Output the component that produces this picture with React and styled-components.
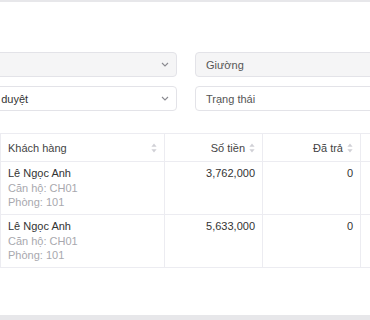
import React from "react";
import styled, { createGlobalStyle } from "styled-components";

const GlobalStyle = createGlobalStyle`
  html, body {
    margin: 0;
    padding: 0;
    background: #ffffff;
    overflow: hidden;
    font-family: "Liberation Sans", Arial, sans-serif;
  }
`;

const rows = [
  { name: "Lê Ngọc Anh", unit: "CH01", room: "101", amount: "3,762,000", paid: "0", debt: "3,762,000" },
  { name: "Lê Ngọc Anh", unit: "CH01", room: "101", amount: "5,633,000", paid: "0", debt: "5,633,000" },
];

function SortIcon() {
  return (
    <svg width="6" height="10" viewBox="0 0 6 10">
      <path d="M3 0.5 L5.6 3.8 H0.4 Z" fill="#d0d0d6" />
      <path d="M3 9.5 L5.6 6.2 H0.4 Z" fill="#d0d0d6" />
    </svg>
  );
}

function Chevron() {
  return (
    <svg width="8" height="5" viewBox="0 0 8 5">
      <path d="M1 1 L4 4 L7 1" fill="none" stroke="#8a8a90" strokeWidth="1.1" />
    </svg>
  );
}

export default function App() {
  return (
    <Page>
      <GlobalStyle />
      <TopBar />
      <Content>
        <Filters>
          <Select disabled>
            <span>Tòa nhà</span>
            <Chevron />
          </Select>
          <Field disabled>Giường</Field>
          <Select>
            <span>Trạng thái duyệt</span>
            <Chevron />
          </Select>
          <Field>Trạng thái</Field>
        </Filters>

        <Table>
          <thead>
            <tr>
              <Th>
                <HeadCell>
                  <span>Khách hàng</span>
                  <SortIcon />
                </HeadCell>
              </Th>
              <Th align="right">
                <HeadCell align="right">
                  <span>Số tiền</span>
                  <SortIcon />
                </HeadCell>
              </Th>
              <Th align="right">
                <HeadCell align="right">
                  <span>Đã trả</span>
                  <SortIcon />
                </HeadCell>
              </Th>
              <Th align="right">
                <HeadCell align="right">
                  <span>Còn nợ</span>
                  <SortIcon />
                </HeadCell>
              </Th>
            </tr>
          </thead>
          <tbody>
            {rows.map((r, i) => (
              <tr key={i}>
                <Td>
                  <Name>{r.name}</Name>
                  <Sub>Căn hộ: {r.unit}</Sub>
                  <Sub>Phòng: {r.room}</Sub>
                </Td>
                <Td align="right">{r.amount}</Td>
                <Td align="right">{r.paid}</Td>
                <Td align="right">{r.debt}</Td>
              </tr>
            ))}
          </tbody>
        </Table>
      </Content>
      <BottomBar />
    </Page>
  );
}

const Page = styled.div`
  width: 370px;
  height: 320px;
  overflow: hidden;
  display: flex;
  flex-direction: column;
`;

const TopBar = styled.div`
  height: 2px;
  flex-shrink: 0;
  background: #e7e7ea;
`;

const Content = styled.div`
  flex: 1;
  padding-top: 50px;
`;

const Filters = styled.div`
  display: grid;
  grid-template-columns: 239px 245px;
  grid-auto-rows: 25px;
  column-gap: 18px;
  row-gap: 9px;
  margin-left: -62px;
`;

const Control = styled.div`
  box-sizing: border-box;
  height: 25px;
  border: 1px solid #e3e3e8;
  border-radius: 4px;
  background: ${(p) => (p.disabled ? "#f5f5f6" : "#ffffff")};
  font-size: 11px;
  color: #444;
  display: flex;
  align-items: center;
  padding: 0 10px;
  white-space: nowrap;
`;

const Select = styled(Control)`
  justify-content: space-between;
  padding-right: 7px;
  color: #333;
`;

const Field = styled(Control)`
  color: #555;
`;

const Table = styled.table`
  margin-top: 22px;
  border-collapse: collapse;
  table-layout: fixed;
  width: 458px;
  font-size: 11px;
  color: #333;
`;

const Th = styled.th`
  box-sizing: border-box;
  height: 28px;
  padding: 0 7px 0 7px;
  font-weight: normal;
  color: #444;
  border: 1px solid #ececf1;
  text-align: ${(p) => p.align || "left"};
  &:first-child {
    width: 164px;
  }
  &:not(:first-child) {
    width: 98px;
  }
`;

const HeadCell = styled.div`
  display: flex;
  align-items: center;
  justify-content: ${(p) => (p.align === "right" ? "flex-end" : "space-between")};
  gap: 4px;
`;

const Td = styled.td`
  box-sizing: border-box;
  vertical-align: top;
  padding: 4px 7px 4px 7px;
  height: 53px;
  line-height: 14.5px;
  border: 1px solid #ececf1;
  text-align: ${(p) => p.align || "left"};
`;

const Name = styled.div`
  color: #333;
`;

const Sub = styled.div`
  color: #a8a8ae;
`;

const BottomBar = styled.div`
  height: 5px;
  flex-shrink: 0;
  background: #e7e7ea;
`;
